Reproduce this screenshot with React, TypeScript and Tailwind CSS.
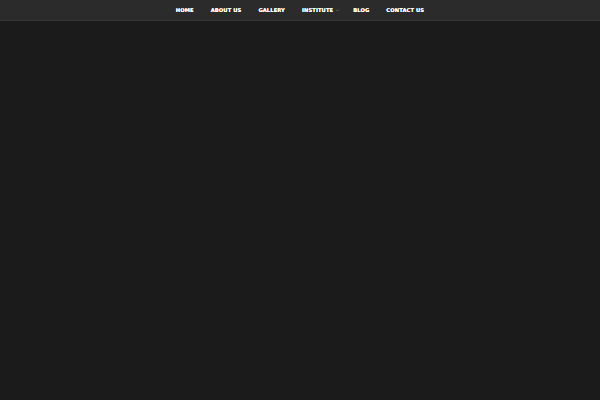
import { ChevronDown } from 'lucide-react';

const links = ['Home', 'About Us', 'Gallery', 'Institute', 'Blog', 'Contact Us'];

export default function App() {
  return (
    <div className="w-[600px] h-[400px] bg-[#1b1b1b] overflow-hidden" style={{ fontFamily: '"DejaVu Sans", sans-serif' }}>
      {/* Top nav */}
      <nav className="h-[21px] bg-[#2b2b2b] border-b border-[#353535] flex justify-center items-center">
        <ul className="flex items-center gap-[17px] pt-[1px]">
          {links.map((l) => (
            <li key={l} className="flex items-center gap-[2px] text-[5.2px] font-extrabold uppercase text-white tracking-[0.1px] [text-shadow:0_0_0.4px_#ffffff]">
              {l}
              {l === 'Institute' && <ChevronDown className="w-[5px] h-[5px] -mr-[4px] text-[#888888]" strokeWidth={2.5} />}
            </li>
          ))}
        </ul>
      </nav>
    </div>
  );
}
